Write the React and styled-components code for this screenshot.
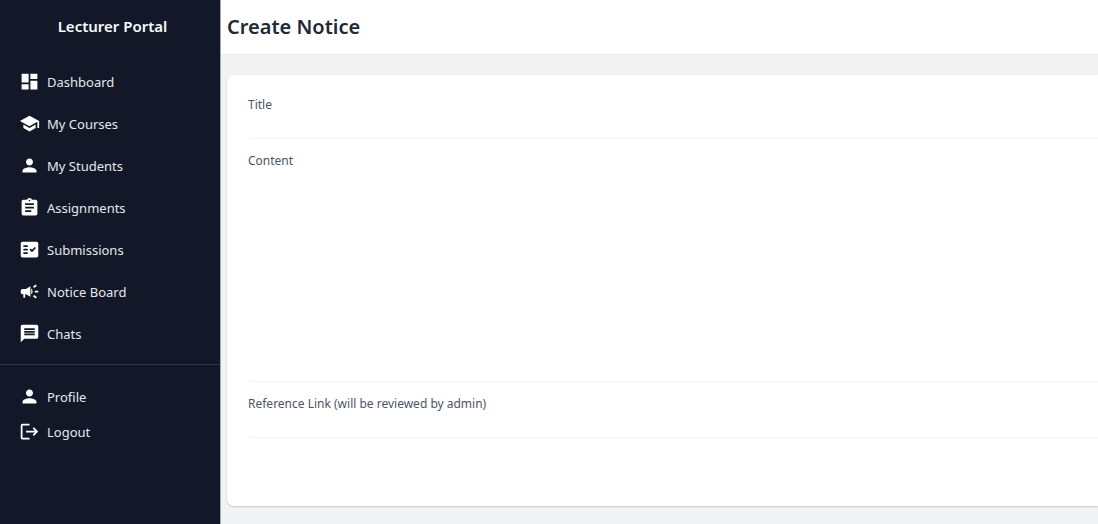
import React from 'react';
import styled, { createGlobalStyle } from 'styled-components';
import {
  MdAssignment,
  MdCampaign,
  MdDashboard,
  MdFactCheck,
  MdLogout,
  MdMessage,
  MdPerson,
  MdSchool,
} from 'react-icons/md';

const GlobalStyle = createGlobalStyle`
  * {
    box-sizing: border-box;
  }

  body {
    margin: 0;
    background: #f2f3f5;
    font-family: "Noto Sans", "Open Sans", sans-serif;
  }
`

const Layout = styled.div`
  display: flex;
  min-height: 100vh;
`

const Sidebar = styled.aside`
  flex: none;
  width: 221px;
  background: #121827;
  border-right: 1px solid #a3a6ab;
  color: #e5e7eb;
`

const Brand = styled.h2`
  margin: 0;
  padding: 14px 0 26px 5px;
  font-size: 15px;
  font-weight: 600;
  line-height: 24px;
  text-align: center;
  color: #f9fafb;
`

const NavList = styled.ul`
  display: flex;
  flex-direction: column;
  gap: ${props => props.$gap};
  margin: 0;
  padding: 0 0 13px 19px;
  list-style: none;
`

const Divider = styled.hr`
  margin: 0 0 14px;
  border: none;
  border-top: 1px solid #28364a;
`

const NavLink = styled.a`
  display: flex;
  align-items: center;
  gap: 7px;
  height: 35px;
  font-size: 13px;
  line-height: 20px;
  color: inherit;
  text-decoration: none;

  svg {
    width: 21px;
    height: 21px;
    color: #ffffff;
  }
`

const Main = styled.main`
  flex: 1;
  min-width: 0;
`

const Header = styled.header`
  padding: 12px 6px;
  background: #ffffff;
  border-bottom: 1px solid #e8eaed;
`

const PageTitle = styled.h1`
  margin: 0;
  font-size: 20px;
  font-weight: 600;
  line-height: 30px;
  color: #1f2937;
`

const Card = styled.form`
  display: flex;
  flex-direction: column;
  gap: 14px;
  margin: 20px 0 18px 6px;
  padding: 21px 0 69px 21px;
  background: #ffffff;
  border-radius: 7px 0 0 7px;
  box-shadow: 0 1px 2px rgba(0, 0, 0, 0.18);
`

const Field = styled.div`
  display: flex;
  flex-direction: column;
  gap: 3px;
`

const Label = styled.label`
  font-size: 12px;
  line-height: 18px;
  color: #4b5563;
`

const Input = styled.input`
  height: 21px;
  padding: 0 8px;
  border: none;
  border-radius: 5px 0 0 5px;
  background: #ffffff;
  box-shadow: 0 1px 1px rgba(0, 0, 0, 0.05);
  font: inherit;
  font-size: 12px;
`

const TextArea = styled(Input).attrs({ as: 'textarea' })`
  height: 208px;
  resize: none;
`

const menu = [
  { label: 'Dashboard', icon: MdDashboard },
  { label: 'My Courses', icon: MdSchool },
  { label: 'My Students', icon: MdPerson },
  { label: 'Assignments', icon: MdAssignment },
  { label: 'Submissions', icon: MdFactCheck },
  { label: 'Notice Board', icon: MdCampaign },
  { label: 'Chats', icon: MdMessage },
];

const account = [
  { label: 'Profile', icon: MdPerson },
  { label: 'Logout', icon: MdLogout },
];

function Nav({ items, gap }) {
  return (
    <NavList $gap={gap}>
      {items.map(({ label, icon: Icon }) =>
        <li key={label}>
          <NavLink href="#">
            <Icon />
            {label}
          </NavLink>
        </li>
      )}
    </NavList>
  );
}

function App() {
  return (
    <Layout>
      <GlobalStyle />
      <Sidebar>
        <Brand>Lecturer Portal</Brand>
        <Nav items={menu} gap="7px" />
        <Divider />
        <Nav items={account} gap="0" />
      </Sidebar>
      <Main>
        <Header>
          <PageTitle>Create Notice</PageTitle>
        </Header>
        <Card>
          <Field>
            <Label htmlFor="title">Title</Label>
            <Input id="title" type="text" />
          </Field>
          <Field>
            <Label htmlFor="content">Content</Label>
            <TextArea id="content" />
          </Field>
          <Field>
            <Label htmlFor="link">Reference Link (will be reviewed by admin)</Label>
            <Input id="link" type="url" />
          </Field>
        </Card>
      </Main>
    </Layout>
  );
}

export default App;
